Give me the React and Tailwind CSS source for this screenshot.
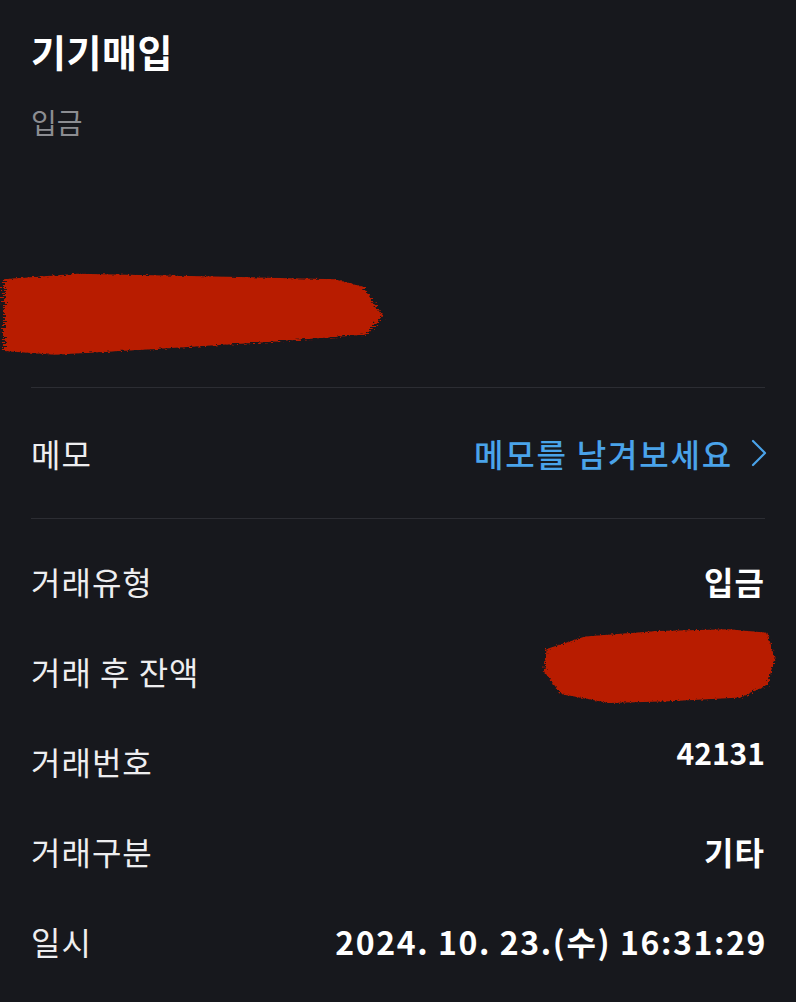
import React from 'react';

const font = { fontFamily: '"Noto Sans CJK KR", "Noto Sans", sans-serif' };

const Scribble = ({ className, d, id }) => (
  <svg className={className} viewBox="0 0 100 100" preserveAspectRatio="none">
    <defs>
      <filter id={id} x="-10%" y="-10%" width="120%" height="120%">
        <feTurbulence type="fractalNoise" baseFrequency="0.9" numOctaves="2" seed="3" />
        <feDisplacementMap in="SourceGraphic" scale="4" />
      </filter>
    </defs>
    <path d={d} fill="#b81c04" filter={`url(#${id})`} />
  </svg>
);

const Row = ({ label, children }) => (
  <div className="flex h-[90px] items-center justify-between">
    <span className="text-[32px] tracking-[1px] text-[#eeeef0]">{label}</span>
    {children}
  </div>
);

export default function App() {
  return (
    <div className="min-h-screen w-[796px] bg-[#17181d] px-[31px] overflow-hidden" style={font}>
      <div className="pt-[25px] h-[75px] flex items-center text-[38px] tracking-[0.5px] font-semibold text-white">기기매입</div>
      <div className="mt-[27px] h-[40px] flex items-center text-[28px] text-[#8c8d92]">입금</div>

      <div className="-ml-[31px] mt-[128px] h-[92px] w-[390px]">
        <Scribble
          id="s1"
          className="h-full w-full"
          d="M1 10 L20 4 L55 7 L86 10 L93 18 L98 50 L94 70 L70 78 L40 86 L14 92 L1 88 Z"
        />
      </div>

      <div className="mt-[25px] border-t border-[#2c2d33]" />

      <div className="flex h-[130px] items-center justify-between">
        <span className="text-[32px] tracking-[1px] text-[#eeeef0]">메모</span>
        <div className="flex items-center gap-[18px] text-[#4aa3ea]">
          <span className="text-[32px] tracking-[1.8px] font-medium">메모를 남겨보세요</span>
          <svg width="16" height="28" viewBox="0 0 16 28" fill="none" className="-mr-[2px]">
            <polyline points="2,2 14,14 2,26" stroke="#4aa3ea" strokeWidth="2.2" strokeLinecap="round" strokeLinejoin="round" />
          </svg>
        </div>
      </div>

      <div className="border-t border-[#2c2d33]" />

      <div className="pt-[17px]">
        <Row label="거래유형">
          <span className="text-[32px] tracking-[1px] font-bold text-white">입금</span>
        </Row>
        <Row label="거래 후 잔액">
          <div className="-mr-[12px] -mt-[8px] h-[90px] w-[240px]">
            <Scribble
              id="s2"
              className="h-full w-full"
              d="M4 30 L20 16 L50 10 L80 8 L96 12 L99 40 L96 70 L85 84 L55 88 L30 90 L10 80 L3 55 Z"
            />
          </div>
        </Row>
        <Row label="거래번호">
          <span className="text-[30px] font-bold text-white -mt-[18px]">42131</span>
        </Row>
        <Row label="거래구분">
          <span className="text-[32px] tracking-[1px] font-bold text-white">기타</span>
        </Row>
        <Row label="일시">
          <span className="text-[32px] tracking-[1.6px] -mr-[2px] font-semibold text-white">2024. 10. 23.(수) 16:31:29</span>
        </Row>
      </div>
    </div>
  );
}
